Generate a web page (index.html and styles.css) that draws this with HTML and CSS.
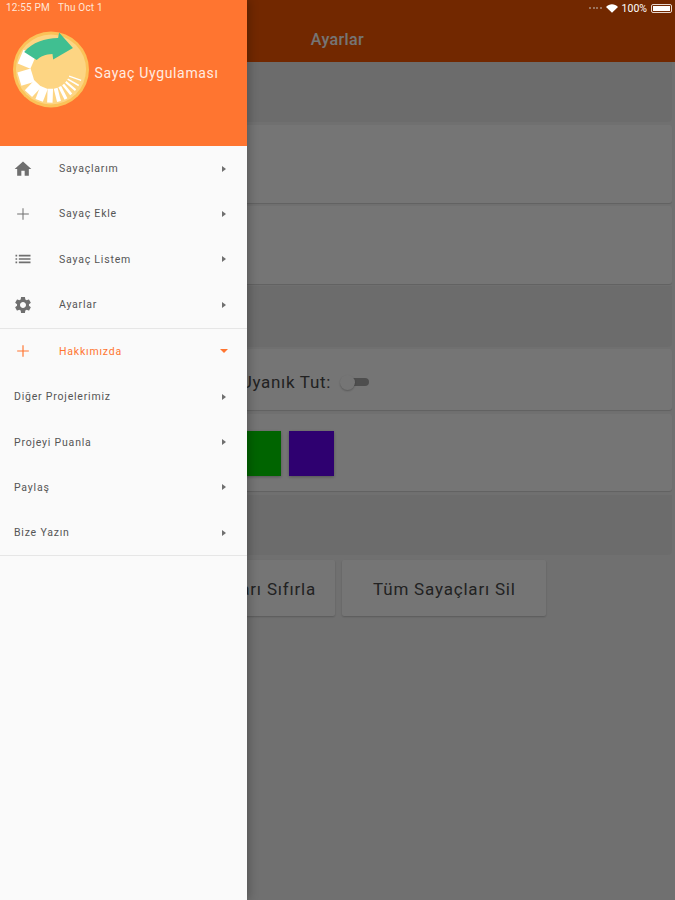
FILE: index.html
```html
<!DOCTYPE html>
<html lang="tr">
<head>
<meta charset="utf-8">
<title>Sayaç Uygulaması</title>
<link rel="stylesheet" href="styles.css">
</head>
<body>
<div class="app">
  <main class="main">
    <header class="appbar">Ayarlar</header>
    <section class="band band-first"></section>
    <section class="card card-tall card-a"></section>
    <section class="card card-tall card-b"></section>
    <section class="band band-second"></section>
    <section class="card card-awake">
      <span class="awake-label">Ekranı Uyanık Tut:</span>
      <span class="switch"><span class="switch-thumb"></span></span>
    </section>
    <section class="card card-colors">
      <span class="swatch swatch-red"></span>
      <span class="swatch swatch-orange"></span>
      <span class="swatch swatch-blue"></span>
      <span class="swatch swatch-teal"></span>
      <span class="swatch swatch-green"></span>
      <span class="swatch swatch-purple"></span>
    </section>
    <section class="band band-third"></section>
    <div class="actions">
      <button class="action action-reset">Tüm Sayaçları Sıfırla</button>
      <button class="action action-delete">Tüm Sayaçları Sil</button>
    </div>
  </main>
  <div class="scrim"></div>
  <div class="status-right">
    <span class="signal"><i></i><i></i><i></i><i></i></span>
    <svg class="wifi" viewBox="0 0 14 10"><path d="M7 10 0 3.2C4-.9 10-.9 14 3.2z"/></svg>
    <span>100%</span>
    <span class="battery"><span class="battery-fill"></span></span>
  </div>
  <aside class="drawer">
    <div class="drawer-head">
      <div class="status-left"><span>12:55 PM</span><span>Thu Oct 1</span></div>
      <div class="brand">
        <svg class="logo" viewBox="0 0 77 77">
          <circle cx="38.5" cy="38.5" r="38.5" fill="#fbc258"/>
          <circle cx="38.5" cy="38.5" r="35.5" fill="#fdd583"/>
          <g stroke="#fff">
            <line x1="58" y1="38.5" x2="72" y2="38.5" stroke-width="15" transform="rotate(203 38.5 38.5)"/>
            <line x1="58" y1="38.5" x2="72" y2="38.5" stroke-width="14" transform="rotate(163 38.5 38.5)"/>
            <line x1="58" y1="38.5" x2="72" y2="38.5" stroke-width="10" transform="rotate(133 38.5 38.5)"/>
            <line x1="58" y1="38.5" x2="72" y2="38.5" stroke-width="8" transform="rotate(111 38.5 38.5)"/>
            <line x1="58" y1="38.5" x2="72" y2="38.5" stroke-width="5.5" transform="rotate(92 38.5 38.5)"/>
            <line x1="58" y1="38.5" x2="72" y2="38.5" stroke-width="4" transform="rotate(76 38.5 38.5)"/>
            <line x1="58" y1="38.5" x2="72" y2="38.5" stroke-width="3.2" transform="rotate(63 38.5 38.5)"/>
            <line x1="58" y1="38.5" x2="71" y2="38.5" stroke-width="2.6" transform="rotate(51 38.5 38.5)"/>
            <line x1="58" y1="38.5" x2="71" y2="38.5" stroke-width="2" transform="rotate(40 38.5 38.5)"/>
            <line x1="58" y1="38.5" x2="71" y2="38.5" stroke-width="1.6" transform="rotate(30 38.5 38.5)"/>
            <line x1="58" y1="38.5" x2="71" y2="38.5" stroke-width="1.3" transform="rotate(20 38.5 38.5)"/>
          </g>
          <path d="M11.3 20.7C20 11 32 7 45.7 6.7L46.7 1 60.7 16.7 40.7 28.3 40 22.7C33 23 28 25 24 29z" fill="#40bf91"/>
        </svg>
        <span class="brand-name">Sayaç Uygulaması</span>
      </div>
    </div>
    <nav class="menu">
      <a class="item">
        <svg class="icon" viewBox="0 0 24 24"><path d="M10 20v-6h4v6h5v-8h3L12 3 2 12h3v8z"/></svg>
        <span class="label">Sayaçlarım</span><span class="arrow"></span>
      </a>
      <a class="item">
        <svg class="icon" viewBox="0 0 24 24"><path d="M19 12.6h-6.4V19h-1.2v-6.4H5v-1.2h6.4V5h1.2v6.4H19z"/></svg>
        <span class="label">Sayaç Ekle</span><span class="arrow"></span>
      </a>
      <a class="item">
        <svg class="icon" viewBox="0 0 24 24"><path d="M3 13h2v-2H3v2zm0 4h2v-2H3v2zm0-8h2V7H3v2zm4 4h14v-2H7v2zm0 4h14v-2H7v2zM7 7v2h14V7H7z"/></svg>
        <span class="label">Sayaç Listem</span><span class="arrow"></span>
      </a>
      <a class="item">
        <svg class="icon" viewBox="0 0 24 24"><path d="M19.14 12.94c.04-.3.06-.61.06-.94 0-.32-.02-.64-.07-.94l2.03-1.58c.18-.14.23-.41.12-.61l-1.92-3.32c-.12-.22-.37-.29-.59-.22l-2.39.96c-.5-.38-1.03-.7-1.62-.94l-.36-2.54c-.04-.24-.24-.41-.48-.41h-3.84c-.24 0-.43.17-.47.41l-.36 2.54c-.59.24-1.13.57-1.62.94l-2.39-.96c-.22-.08-.47 0-.59.22L2.74 8.87c-.12.21-.08.47.12.61l2.03 1.58c-.05.3-.09.63-.09.94s.02.64.07.94l-2.03 1.58c-.18.14-.23.41-.12.61l1.92 3.32c.12.22.37.29.59.22l2.39-.96c.5.38 1.03.7 1.62.94l.36 2.54c.05.24.24.41.48.41h3.84c.24 0 .44-.17.47-.41l.36-2.54c.59-.24 1.13-.56 1.62-.94l2.39.96c.22.08.47 0 .59-.22l1.92-3.32c.12-.22.07-.47-.12-.61l-2.01-1.58zM12 15.6c-1.98 0-3.6-1.62-3.6-3.6s1.62-3.6 3.6-3.6 3.6 1.62 3.6 3.6-1.62 3.6-3.6 3.6z"/></svg>
        <span class="label">Ayarlar</span><span class="arrow"></span>
      </a>
      <div class="group">
        <a class="item item-open">
          <svg class="icon" viewBox="0 0 24 24"><path d="M19 12.7h-6.3V19h-1.4v-6.3H5v-1.4h6.3V5h1.4v6.3H19z"/></svg>
          <span class="label">Hakkımızda</span><span class="arrow-down"></span>
        </a>
        <a class="item item-sub"><span class="label">Diğer Projelerimiz</span><span class="arrow"></span></a>
        <a class="item item-sub"><span class="label">Projeyi Puanla</span><span class="arrow"></span></a>
        <a class="item item-sub"><span class="label">Paylaş</span><span class="arrow"></span></a>
        <a class="item item-sub"><span class="label">Bize Yazın</span><span class="arrow"></span></a>
      </div>
    </nav>
  </aside>
</div>
</body>
</html>
```
FILE: styles.css
```css
* { box-sizing: border-box; }
html, body { margin: 0; height: 100%; }
body { font-family: Roboto, "Noto Sans", sans-serif; background: #f4f4f4; overflow: hidden; }
.app { position: relative; width: 675px; height: 900px; overflow: hidden; }

.main { display: flex; flex-direction: column; height: 100%; background: #f4f4f4; }
.appbar {
  height: 62px; flex: none; padding-top: 31px; text-align: center;
  background: #f85700; color: #fff; font-size: 16px; font-weight: 500; letter-spacing: .4px; line-height: 18px;
}
.band { flex: none; height: 60px; margin-right: 3px; background: #ececec; border-radius: 0 0 4px 4px; }
.band-second { margin-top: 2px; height: 61px; }
.band-third { margin-top: 4px; height: 60px; }
.card { flex: none; margin-right: 3px; background: #fff; border-radius: 3px; box-shadow: 0 1px 1px rgba(0,0,0,.14); }
.card-tall { height: 78px; }
.card-a { margin-top: 3px; }
.card-b { margin-top: 3px; }
.card-awake { margin-top: 2px; height: 61px; display: flex; align-items: center; padding: 4px 0 0 185px; font-size: 17px; letter-spacing: .7px; color: #4a4a4a; }
.awake-label { white-space: nowrap; }
.switch { position: relative; width: 26px; height: 8px; margin-left: 12px; background: #aaa; border-radius: 4px; }
.switch-thumb { position: absolute; left: -3px; top: -3px; width: 15px; height: 15px; border-radius: 50%; background: #fff; box-shadow: 0 1px 2px rgba(0,0,0,.25); }
.card-colors { margin-top: 4px; height: 77px; display: flex; align-items: center; gap: 8.5px; padding: 2px 0 0 21.5px; }
.swatch { flex: none; width: 45px; height: 45px; box-shadow: 0 1px 3px rgba(0,0,0,.3); }
.swatch-red { background: #f44336; }
.swatch-orange { background: #ff9800; }
.swatch-blue { background: #2196f3; }
.swatch-teal { background: #009688; }
.swatch-green { background: #00d900; }
.swatch-purple { background: #6400f5; }
.actions { display: flex; gap: 7px; margin-top: 5px; padding-left: 126px; }
.action {
  height: 56px; border: 0; border-radius: 2px; background: #fff; color: #4a4a4a; padding-top: 2px;
  font: 400 17px Roboto, sans-serif; letter-spacing: .8px; box-shadow: 0 1px 2px rgba(0,0,0,.2); white-space: nowrap;
}
.action-reset { padding-left: 19px; padding-right: 19px; }
.action-delete { padding-left: 31px; padding-right: 30px; }

.scrim { position: absolute; inset: 0; background: rgba(0,0,0,.54); }

.status-right {
  position: absolute; top: 2px; right: 3px; height: 12px; display: flex; align-items: center; gap: 4px;
  font-size: 10.5px; color: #fff;
}
.signal { display: flex; gap: 1.5px; }
.signal i { width: 2px; height: 2px; border-radius: 50%; background: #a98c7c; }
.wifi { width: 12px; height: 9px; fill: #fff; }
.battery { width: 21px; height: 9px; padding: 1px; border: 1px solid #e8d8d0; border-radius: 2px; }
.battery-fill { display: block; height: 100%; background: #fff; }

.drawer {
  position: absolute; left: 0; top: 0; bottom: 0; width: 247px; background: #fafafa;
  box-shadow: 2px 0 9px rgba(0,0,0,.25);
}
.drawer-head { height: 146px; background: #ff7530; color: #fff; }
.status-left { display: flex; gap: 8px; padding: 2px 0 0 6px; height: 13px; font-size: 10px; letter-spacing: .2px; line-height: 12px; color: #ffe6d8; }
.brand { display: flex; align-items: center; gap: 6px; padding: 18px 0 0 12.5px; }
.logo { width: 76px; height: 77px; flex: none; }
.brand-name { font-size: 14px; letter-spacing: .66px; color: #ffece2; position: relative; top: 3px; }

.menu { display: flex; flex-direction: column; }
.item { display: flex; align-items: center; height: 45.3px; padding: 0 21px 0 13px; font-size: 10.5px; letter-spacing: .8px; color: #555; }
.icon { width: 20px; height: 20px; flex: none; fill: #6f6f6f; margin-right: 26px; }
.label { flex: 1; }
.arrow { width: 0; height: 0; border-left: 4px solid #6f6f6f; border-top: 3.5px solid transparent; border-bottom: 3.5px solid transparent; }
.arrow-down { width: 0; height: 0; margin-right: -2px; border-top: 4px solid #ff7530; border-left: 4px solid transparent; border-right: 4px solid transparent; }
.group { margin-top: .6px; border-top: 1px solid #e6e6e6; border-bottom: 1px solid #e6e6e6; }
.item-open { color: #ff7530; }
.item-open .icon { fill: #ff7530; }
.item-sub { padding-left: 14px; }
```
